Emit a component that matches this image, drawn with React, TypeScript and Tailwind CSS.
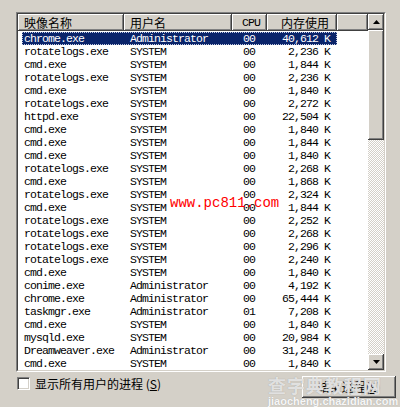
import type { ReactNode } from 'react';

interface Proc {
  name: string;
  user: string;
  cpu: string;
  mem: string;
}

const PROCS: Proc[] = [
  { name: 'chrome.exe', user: 'Administrator', cpu: '00', mem: '40,612 K' },
  { name: 'rotatelogs.exe', user: 'SYSTEM', cpu: '00', mem: '2,236 K' },
  { name: 'cmd.exe', user: 'SYSTEM', cpu: '00', mem: '1,844 K' },
  { name: 'rotatelogs.exe', user: 'SYSTEM', cpu: '00', mem: '2,236 K' },
  { name: 'cmd.exe', user: 'SYSTEM', cpu: '00', mem: '1,840 K' },
  { name: 'rotatelogs.exe', user: 'SYSTEM', cpu: '00', mem: '2,272 K' },
  { name: 'httpd.exe', user: 'SYSTEM', cpu: '00', mem: '22,504 K' },
  { name: 'cmd.exe', user: 'SYSTEM', cpu: '00', mem: '1,840 K' },
  { name: 'cmd.exe', user: 'SYSTEM', cpu: '00', mem: '1,844 K' },
  { name: 'cmd.exe', user: 'SYSTEM', cpu: '00', mem: '1,840 K' },
  { name: 'rotatelogs.exe', user: 'SYSTEM', cpu: '00', mem: '2,268 K' },
  { name: 'cmd.exe', user: 'SYSTEM', cpu: '00', mem: '1,868 K' },
  { name: 'rotatelogs.exe', user: 'SYSTEM', cpu: '00', mem: '2,324 K' },
  { name: 'cmd.exe', user: 'SYSTEM', cpu: '00', mem: '1,844 K' },
  { name: 'rotatelogs.exe', user: 'SYSTEM', cpu: '00', mem: '2,252 K' },
  { name: 'rotatelogs.exe', user: 'SYSTEM', cpu: '00', mem: '2,268 K' },
  { name: 'rotatelogs.exe', user: 'SYSTEM', cpu: '00', mem: '2,296 K' },
  { name: 'rotatelogs.exe', user: 'SYSTEM', cpu: '00', mem: '2,240 K' },
  { name: 'cmd.exe', user: 'SYSTEM', cpu: '00', mem: '1,840 K' },
  { name: 'conime.exe', user: 'Administrator', cpu: '00', mem: '4,192 K' },
  { name: 'chrome.exe', user: 'Administrator', cpu: '00', mem: '65,444 K' },
  { name: 'taskmgr.exe', user: 'Administrator', cpu: '01', mem: '7,208 K' },
  { name: 'cmd.exe', user: 'SYSTEM', cpu: '00', mem: '1,840 K' },
  { name: 'mysqld.exe', user: 'SYSTEM', cpu: '00', mem: '20,984 K' },
  { name: 'Dreamweaver.exe', user: 'Administrator', cpu: '00', mem: '31,248 K' },
  { name: 'cmd.exe', user: 'SYSTEM', cpu: '00', mem: '1,840 K' },
];

const MONO = "font-['Liberation_Mono',monospace] text-[11.5px] tracking-[-0.9px]";
const CJK = "font-['Noto_Sans_CJK_SC',sans-serif] text-[12px]";

// raised win2k bevel
const RAISED =
  'bg-[#d4d0c8] shadow-[inset_-1px_-1px_#404040,inset_1px_1px_#ffffff,inset_-2px_-2px_#808080]';

function HeaderCell({ w, className, children }: { w: string; className?: string; children?: ReactNode }) {
  return (
    <div className={`${w} h-full ${RAISED} flex items-center ${className ?? ''}`}>{children}</div>
  );
}

function Arrow({ up }: { up?: boolean }) {
  return (
    <div className={`w-[16px] h-[16px] ${RAISED} flex items-center justify-center`}>
      <svg width="7" height="4" viewBox="0 0 7 4">
        {up ? <polygon points="3.5,0 7,4 0,4" fill="#000" /> : <polygon points="0,0 7,0 3.5,4" fill="#000" />}
      </svg>
    </div>
  );
}

export default function App() {
  return (
    <div className="relative w-[400px] h-[407px] bg-[#d4d0c8] pt-[12px] pl-[16px] overflow-hidden">
      {/* list view, sunken */}
      <div className="w-[370px] h-[360px] border border-t-[#808080] border-l-[#808080] border-b-white border-r-white">
        <div className="w-full h-full border border-t-[#404040] border-l-[#404040] border-b-[#d4d0c8] border-r-[#d4d0c8] bg-white flex">
          <div className="flex-1 flex flex-col overflow-hidden">
            <div className="h-[17px] flex shrink-0">
              <HeaderCell w="w-[106px]" className={`pl-[6px] ${CJK}`}>映像名称</HeaderCell>
              <HeaderCell w="w-[108px]" className={`pl-[6px] ${CJK}`}>用户名</HeaderCell>
              <HeaderCell w="w-[35px]" className={`pl-[10px] ${MONO}`}>CPU</HeaderCell>
              <HeaderCell w="w-[70px]" className={`justify-end pr-[8px] ${CJK}`}>内存使用</HeaderCell>
              <HeaderCell w="flex-1" />
            </div>
            <div className="pt-[1px] pl-[4px]">
              {PROCS.map((p, i) => {
                const sel = i === 0;
                return (
                  <div
                    key={i}
                    className={`w-[315px] h-[13px] leading-[13px] flex ${MONO} ${
                      sel ? 'bg-[#0a246a] text-white outline outline-1 outline-dotted outline-[#c0c8e0] -outline-offset-1' : 'text-black'
                    }`}
                  >
                    <div className="w-[102px] pl-[2px] whitespace-nowrap overflow-hidden">{p.name}</div>
                    <div className="w-[108px] pl-[6px] whitespace-nowrap overflow-hidden">{p.user}</div>
                    <div className="w-[35px] pl-[11px]">{p.cpu}</div>
                    <div className="w-[70px] pr-[7px] text-right whitespace-nowrap">{p.mem}</div>
                  </div>
                );
              })}
            </div>
          </div>
          {/* vertical scrollbar */}
          <div className="w-[16px] flex flex-col">
            <Arrow up />
            <div className={`h-[110px] ${RAISED}`} />
            <div className="flex-1 bg-[repeating-conic-gradient(#d4d0c8_0%_25%,#ffffff_0%_50%)] bg-[length:2px_2px]" />
            <Arrow />
          </div>
        </div>
      </div>

      {/* bottom bar */}
      <div className="flex items-start mt-[4px] pr-[16px]">
        <div className="mt-[1px] ml-[1px] w-[13px] h-[13px] bg-white border border-t-[#808080] border-l-[#808080] border-b-white border-r-white shadow-[inset_1px_1px_#404040,inset_-1px_-1px_#d4d0c8]" />
        <div className={`ml-[5px] leading-[15px] text-black ${CJK}`}>
          显示所有用户的进程 (<span className="underline">S</span>)
        </div>
        <div className={`ml-auto mr-[-12px] w-[94px] h-[22px] ${RAISED} flex items-center justify-center ${CJK} text-black`}>
          结束进程(<span className="underline">E</span>)
        </div>
      </div>

      {/* red watermark */}
      <div className="absolute left-[170px] top-[196px] font-['Liberation_Mono',monospace] text-[14px] text-[#ff0000] leading-[14px]">
        www.pc811.com
      </div>

      {/* site watermark */}
      <div className="absolute left-[268px] top-[374px] flex flex-col items-start pointer-events-none">
        <div className="font-['Noto_Sans_CJK_SC',sans-serif] text-[18px] leading-[22px] font-bold text-white/70 [text-shadow:0_0_1px_#9a9a9a] tracking-[1px]">
          查字典教程网
        </div>
        <div className="font-['Liberation_Sans',sans-serif] text-[11px] leading-[11px] font-bold text-white/90 [text-shadow:0_0_1px_#a0a0a0]">
          jiaocheng.chazidian.com
        </div>
      </div>
    </div>
  );
}
